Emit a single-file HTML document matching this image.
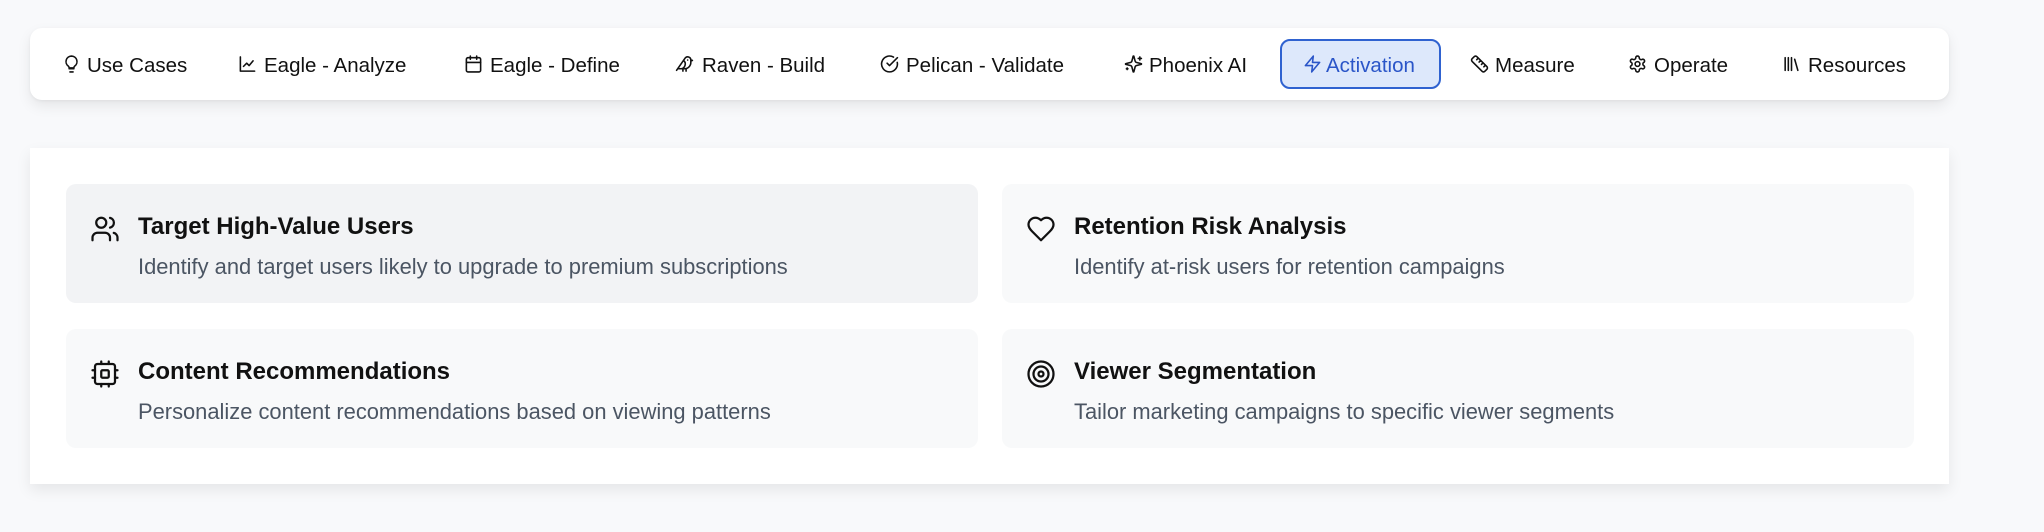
<!DOCTYPE html>
<html><head><meta charset="utf-8"><style>
*{margin:0;padding:0;box-sizing:border-box}
body{width:2044px;height:532px;background:#f8f9fb;font-family:"Liberation Sans",sans-serif;position:relative;overflow:hidden;color:#111}
.nav{position:absolute;left:30px;top:28px;width:1919px;height:72px;background:#fff;border-radius:12px;box-shadow:0 6px 14px rgba(0,0,0,.08),0 1px 3px rgba(0,0,0,.05)}
.it{position:absolute;top:65.5px;transform:translateY(-50%);font-size:20.5px;color:#111;white-space:nowrap}
.ic{position:absolute;top:64px;transform:translateY(-50%);width:19px;height:19px}
svg{fill:none;stroke:#111;stroke-width:2;stroke-linecap:round;stroke-linejoin:round}
.act{position:absolute;left:1280px;top:39px;width:161px;height:50px;border:2.5px solid #2f62d0;border-radius:10px;background:#dde8fb}
.panel{position:absolute;left:30px;top:148px;width:1919px;height:336px;background:#fff;box-shadow:0 6px 14px rgba(0,0,0,.08)}
.card{position:absolute;width:912px;height:119px;border-radius:10px;background:#f8f9fa}
.card .t{position:absolute;left:72px;top:29px;font-size:24px;font-weight:bold;color:#111}
.card .d{position:absolute;left:72px;top:70px;font-size:21.9px;color:#4b5563}
.card svg{position:absolute;left:24px;top:30px;width:30px;height:30px;stroke-width:1.8}
</style></head><body>
<div class="nav"></div>
<div class="act"></div>
<svg class="ic" style="left:62px" viewBox="0 0 24 24"><path d="M9 18h6M10 22h4M12 2a7 7 0 0 0-4 12.7c.6.5 1 1.3 1 2.3h6c0-1 .4-1.8 1-2.3A7 7 0 0 0 12 2z"/></svg>
<div class="it" style="left:87px">Use Cases</div>
<svg class="ic" style="left:238px" viewBox="0 0 24 24"><path d="M3 3v18h18M7 15l4-4 3 3 5-6"/></svg>
<div class="it" style="left:264px">Eagle - Analyze</div>
<svg class="ic" style="left:464px" viewBox="0 0 24 24"><rect x="3" y="4" width="18" height="18" rx="2"/><path d="M16 2v4M8 2v4M3 10h18"/></svg>
<div class="it" style="left:490px">Eagle - Define</div>
<svg class="ic" style="left:675px" viewBox="0 0 24 24"><path d="M16 7h.01M3.4 18H12a8 8 0 0 0 8-8V7a4 4 0 0 0-7.3-2.3L2 20M20 7l2 .5-2 .5M10 18v3M14 17.75V21M7 18a6 6 0 0 0 3.8-10.6"/></svg>
<div class="it" style="left:702px">Raven - Build</div>
<svg class="ic" style="left:880px" viewBox="0 0 24 24"><path d="M21.8 10A10 10 0 1 1 17 3.3"/><path d="M9 11l3 3L22 4"/></svg>
<div class="it" style="left:906px">Pelican - Validate</div>
<svg class="ic" style="left:1124px" viewBox="0 0 24 24"><path d="M9.9 15.5A2 2 0 0 0 8.5 14.1L2.4 12.5a.5.5 0 0 1 0-1l6.1-1.6A2 2 0 0 0 9.9 8.5L11.5 2.4a.5.5 0 0 1 1 0l1.6 6.1a2 2 0 0 0 1.4 1.4l6.1 1.6a.5.5 0 0 1 0 1l-6.1 1.6a2 2 0 0 0-1.4 1.4l-1.6 6.1a.5.5 0 0 1-1 0zM20 3v4M22 5h-4M4 17v2M5 18H3"/></svg>
<div class="it" style="left:1149px">Phoenix AI</div>
<svg class="ic" style="left:1303px" viewBox="0 0 24 24"><path d="M13 2L3 14h9l-1 8 10-12h-9l1-8z" style="stroke:#2a55c8"/></svg>
<div class="it" style="left:1326px;color:#2a55c8">Activation</div>
<svg class="ic" style="left:1470px" viewBox="0 0 24 24"><path d="M21.3 15.3a2.4 2.4 0 0 1 0 3.4l-2.6 2.6a2.4 2.4 0 0 1-3.4 0L2.7 8.7a2.4 2.4 0 0 1 0-3.4l2.6-2.6a2.4 2.4 0 0 1 3.4 0zM14.5 12.5l2-2M11.5 9.5l2-2M8.5 6.5l2-2M17.5 15.5l2-2"/></svg>
<div class="it" style="left:1495px">Measure</div>
<svg class="ic" style="left:1628px" viewBox="0 0 24 24"><circle cx="12" cy="12" r="3"/><path d="M12.2 2h-.4a2 2 0 0 0-2 2v.2a2 2 0 0 1-1 1.7l-.4.3a2 2 0 0 1-2 0l-.2-.1a2 2 0 0 0-2.7.7l-.2.4a2 2 0 0 0 .7 2.7l.2.1a2 2 0 0 1 1 1.7v.5a2 2 0 0 1-1 1.8l-.2.1a2 2 0 0 0-.7 2.7l.2.4a2 2 0 0 0 2.7.7l.2-.1a2 2 0 0 1 2 0l.4.3a2 2 0 0 1 1 1.7v.2a2 2 0 0 0 2 2h.4a2 2 0 0 0 2-2v-.2a2 2 0 0 1 1-1.7l.4-.3a2 2 0 0 1 2 0l.2.1a2 2 0 0 0 2.7-.7l.2-.4a2 2 0 0 0-.7-2.7l-.2-.1a2 2 0 0 1-1-1.7v-.5a2 2 0 0 1 1-1.7l.2-.1a2 2 0 0 0 .7-2.7l-.2-.4a2 2 0 0 0-2.7-.7l-.2.1a2 2 0 0 1-2 0l-.4-.3a2 2 0 0 1-1-1.7V4a2 2 0 0 0-2-2z"/></svg>
<div class="it" style="left:1654px">Operate</div>
<svg class="ic" style="left:1782px" viewBox="0 0 24 24"><path d="M4 4v16M8 4v16M12 4v16M16 6l4 14"/></svg>
<div class="it" style="left:1808px">Resources</div>

<div class="panel"></div>
<div class="card" style="left:66px;top:184px;background:#f2f3f5">
<svg viewBox="0 0 24 24"><path d="M16 21v-2a4 4 0 0 0-4-4H6a4 4 0 0 0-4 4v2"/><circle cx="9" cy="7" r="4"/><path d="M22 21v-2a4 4 0 0 0-3-3.9M16 3.1a4 4 0 0 1 0 7.8"/></svg>
<div class="t">Target High-Value Users</div><div class="d">Identify and target users likely to upgrade to premium subscriptions</div></div>
<div class="card" style="left:1002px;top:184px">
<svg viewBox="0 0 24 24"><path d="M19 14c1.5-1.5 3-3.2 3-5.5A5.5 5.5 0 0 0 16.5 3c-1.8 0-3 .5-4.5 2-1.5-1.5-2.7-2-4.5-2A5.5 5.5 0 0 0 2 8.5c0 2.3 1.5 4 3 5.5l7 7z"/></svg>
<div class="t">Retention Risk Analysis</div><div class="d">Identify at-risk users for retention campaigns</div></div>
<div class="card" style="left:66px;top:329px">
<svg viewBox="0 0 24 24"><rect x="4" y="4" width="16" height="16" rx="2"/><rect x="9" y="9" width="6" height="6" rx="1"/><path d="M15 2v2M15 20v2M2 15h2M2 9h2M20 15h2M20 9h2M9 2v2M9 20v2"/></svg>
<div class="t">Content Recommendations</div><div class="d">Personalize content recommendations based on viewing patterns</div></div>
<div class="card" style="left:1002px;top:329px">
<svg viewBox="0 0 24 24"><circle cx="12" cy="12" r="10"/><circle cx="12" cy="12" r="6"/><circle cx="12" cy="12" r="2"/></svg>
<div class="t">Viewer Segmentation</div><div class="d">Tailor marketing campaigns to specific viewer segments</div></div>
</body></html>
